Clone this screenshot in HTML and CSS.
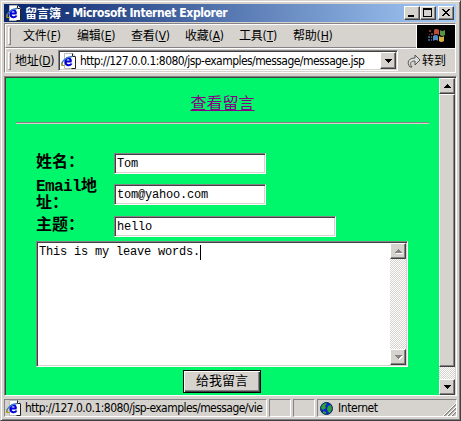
FILE: index.html
```html
<!DOCTYPE html>
<html lang="zh-CN">
<head>
<meta charset="utf-8">
<title>留言簿</title>
<link rel="stylesheet" href="styles.css">
</head>
<body>
<svg class="defs" width="0" height="0" aria-hidden="true">
  <symbol id="ie" viewBox="0 0 16 16">
    <path d="M3.500 .5h8l3 3v12h-11z" fill="#fff" stroke="#bbb"/>
    <path d="M14.500 4v11.500h-4M11.500 .5v3h3" fill="none" stroke="#222"/>
    <path d="M10.500 8.500H4.500C4.500 4.500 9.500 4 10 8.500M4.500 9c0 4 5 4 6 1.500" fill="none" stroke="#0000d8" stroke-width="2"/>
    <path d="M1 12C0 9 5 4 11 3.500" fill="none" stroke="#3978c8" stroke-width="1.300"/>
    <path d="M1 9.500v3h2.500" fill="none" stroke="#a89a00" stroke-width="1.200"/>
  </symbol>
  <symbol id="up" viewBox="0 0 7 4"><path d="M3 0h1v1h1v1h1v1h1v1H0V3h1V2h1V1h1z" fill="currentColor"/></symbol>
  <symbol id="down" viewBox="0 0 7 4"><path d="M0 0h7v1H6v1H5v1H4v1H3V3H2V2H1V1H0z" fill="currentColor"/></symbol>
</svg>
<div class="window">
  <header class="title">
    <svg class="ie"><use href="#ie"/></svg>
    <span class="title-cn">留言簿</span><span class="title-en">- Microsoft Internet Explorer</span>
    <div class="controls">
      <i class="btn"><svg viewBox="0 0 12 10"><path d="M2 7h6v2H2z"/></svg></i>
      <i class="btn"><svg viewBox="0 0 12 10"><path d="M1 0h9v9H1zM2 2v6h7V2z" fill-rule="evenodd"/></svg></i>
      <i class="btn close"><svg viewBox="0 0 12 10"><path d="M2 1h2v1h1v1h2V2h1V1h2v1H9v1H8v1H7v1h1v1h1v1h1v1H8V7H7V6H5v1H4v1H2V7h1V6h1V5h1V4H4V3H3V2H2z"/></svg></i>
    </div>
  </header>
  <div class="bars">
    <nav class="menu">
      <i class="grip"></i>
      <span>文件(<u>F</u>)</span><span>编辑(<u>E</u>)</span><span>查看(<u>V</u>)</span><span>收藏(<u>A</u>)</span><span>工具(<u>T</u>)</span><span>帮助(<u>H</u>)</span>
      <div class="throbber"><svg viewBox="0 0 38 22">
        <path d="M17 5q2-2 5 0v5q-3-2-5 0z" fill="#b85035"/><path d="M23 5q2 2 5 0v5q-3 2-5 0z" fill="#579348"/>
        <path d="M16 11q3-2 5 0v5q-2-2-5 0z" fill="#5489c5"/><path d="M22 11q3 2 5 0v5q-3 2-5 0z" fill="#d2b344"/>
        <path d="M12 5h2v2h-2zM14 8h2v2h-2zM12 9h1v1h-1z" fill="#78382c"/><path d="M11 11h2v2h-2zM14 11h1v2h-1zM11 14h2v2h-2zM14 14h1v2h-1z" fill="#31577c"/>
      </svg></div>
    </nav>
    <div class="address">
      <i class="grip"></i><span class="addr-label">地址(<u>D</u>)</span>
      <div class="combo"><svg class="ie"><use href="#ie"/></svg><span class="url">http://127.0.0.1:8080/jsp-examples/message/message.jsp</span><i class="btn drop"><svg class="arrow"><use href="#down"/></svg></i></div>
      <svg class="go" viewBox="0 0 14 14"><path d="M3 13C-1 8 2 4 8 4V1l5 5-5 5V7C4 7 2 9 5 13z" fill="#ddd" stroke="#555"/></svg><span class="go-label">转到</span>
    </div>
  </div>
  <div class="view">
    <main class="page">
      <a class="link">查看留言</a>
      <div class="rule"></div>
      <div class="row row1"><b>姓名：</b><div class="field">Tom</div></div>
      <div class="row row2"><b><span class="latin">Email</span>地<br>址：</b><div class="field">tom@yahoo.com</div></div>
      <div class="row row3"><b>主题：</b><div class="field wide">hello</div></div>
      <div class="area"><div class="words">This is my leave words.<i class="caret"></i></div>
        <div class="scroll muted"><i class="btn"><svg class="arrow"><use href="#up"/></svg></i><i class="btn"><svg class="arrow"><use href="#down"/></svg></i></div></div>
      <div class="submit">给我留言</div>
    </main>
    <div class="scroll main-scroll"><i class="btn"><svg class="arrow"><use href="#up"/></svg></i><i class="btn thumb"></i><i class="btn last"><svg class="arrow"><use href="#down"/></svg></i></div>
  </div>
  <footer class="status">
    <div class="pane p1"><svg class="ie"><use href="#ie"/></svg><span>http://127.0.0.1:8080/jsp-examples/message/vie</span></div>
    <div class="pane p2"></div><div class="pane p2"></div>
    <div class="pane p3"><svg class="globe" viewBox="0 0 13 13"><circle cx="6.500" cy="6.500" r="6" fill="#0828c8" stroke="#082850"/><path d="M2 3l3-2 2 1-2 2 1 2-3 2-2-2zM8 4l3-1 1 4-2 4-2-1-1-3zM3 9l3 1v2l-3-1z" fill="#30a038"/></svg><span>Internet</span>
      <svg class="size" viewBox="0 0 13 13"><path d="M1 13L13 1M5 13l8-8M9 13l4-4" stroke="#808080" stroke-width="1.500"/><path d="M0 13L13 0M4 13l9-9M8 13l5-5" stroke="#fff"/></svg></div>
  </footer>
</div>
</body>
</html>
```
FILE: styles.css
```css
* { box-sizing: border-box; }
body { margin: 0; width: 461px; height: 421px; overflow: hidden; background: #d6d3ce; color: #000; font: 12px/16px "DejaVu Sans Condensed", "Noto Sans CJK SC", sans-serif; }
.defs { display: block; position: absolute; }
i { font-style: normal; display: block; flex: none; }
svg { display: block; flex: none; }
span { white-space: nowrap; }
.window { width: 461px; height: 421px; padding: 3px 2px 2px 3px; border: 1px solid; border-color: #d6d3ce #424142 #424142 #d6d3ce; box-shadow: inset 1px 1px #fff, inset -1px -1px #848284; }
.ie { width: 16px; height: 16px; }
.title { width: 452px; height: 18px; display: flex; align-items: center; padding-left: 2px; background: linear-gradient(90deg, #08246b, #a5cbf7); color: #fff; font-weight: bold; }
.title-cn { font: bold 12px/18px "Noto Sans CJK TC", sans-serif; margin-left: 3px; }
.title-en { font: bold 12px/18px "DejaVu Sans Condensed", sans-serif; letter-spacing: -.400px; margin-left: 4px; }
.controls { display: flex; margin-left: auto; margin-right: 2px; }
.controls .btn { width: 16px; height: 14px; }
.controls svg { width: 12px; height: 10px; }
.controls .close { margin-left: 2px; }
.btn { background: #d6d3ce; color: #000; display: flex; align-items: center; justify-content: center; border: 1px solid; border-color: #fff #424142 #424142 #fff; box-shadow: inset -1px -1px #848284; }
.arrow { width: 7px; height: 4px; }
.bars { width: 452px; height: 50px; margin-top: 1px; border: 1px solid; border-color: #848284 #fff #fff #848284; }
.menu, .address { display: flex; align-items: center; height: 24px; }
.menu { border-top: 1px solid #fff; border-left: 1px solid #fff; border-bottom: 1px solid #848284; }
.address { border-top: 1px solid #fff; border-left: 1px solid #fff; }
.grip { width: 3px; height: 18px; margin-left: 2px; border: 1px solid; border-color: #fff #848284 #848284 #fff; }
.menu span { width: 54px; letter-spacing: -.200px; }
.menu .grip + span { margin-left: 12px; }
.throbber { width: 39px; height: 23px; background: #000; margin-left: auto; border-left: 1px solid #fff; }
.throbber svg { width: 38px; height: 22px; }
.addr-label { width: 43px; margin-left: 4px; letter-spacing: -.300px; }
.combo { display: flex; align-items: center; width: 340px; flex: none; height: 21px; padding: 0 0 0 2px; background: #fff; border: 1px solid; border-color: #848284 #fff #fff #848284; box-shadow: inset 1px 1px #424142, inset -1px -1px #d6d3ce; }
.url { margin-left: 3px; letter-spacing: -.550px; }
.drop { width: 16px; height: 17px; margin: 0 1px 0 auto; }
.go { width: 14px; height: 14px; margin-left: 9px; }
.go-label { margin-left: 1px; }
.view { width: 453px; height: 320px; margin-top: 3px; display: flex; border: 1px solid; border-color: #848284 #fff #fff #848284; box-shadow: inset 1px 1px #424142; padding: 1px 0 0 1px; }
.page { width: 433px; height: 317px; background: #00f76b; padding: 14px 10px 0; font: 13px/15px "Liberation Mono", "Noto Sans CJK SC", monospace; }
.link { display: block; width: 64px; height: 20px; margin: 0 auto; color: #840084; font: 16px/20px "Noto Sans CJK SC", sans-serif; text-decoration: underline; white-space: nowrap; }
.rule { height: 2px; margin-top: 10px; background: #d6d3ce; border-top: 1px solid #848284; }
.row { display: flex; align-items: flex-start; margin-left: 20px; }
.row b { width: 78px; font: bold 16px/17px "Liberation Mono", "Noto Sans CJK SC", monospace; white-space: nowrap; }
.latin { letter-spacing: -.600px; }
.row1 { margin-top: 29px; height: 25px; }
.row1 b { margin-top: 2px; }
.row2 { height: 34px; }
.row2 b { margin-top: 1px; }
.row2 .field { margin-top: 6px; }
.row3 { height: 29px; padding-top: 4px; }
.row3 b { margin-top: 2px; }
.field { width: 152px; height: 21px; padding: 3px 2px; background: #fff; border: 1px solid; border-color: #848284 #fff #fff #848284; box-shadow: inset 1px 1px #424142, inset -1px -1px #d6d3ce; font: 12px/14px "Liberation Mono", monospace; letter-spacing: -.200px; }
.wide { width: 222px; }
.area { display: flex; justify-content: space-between; margin-left: 20px; width: 372px; height: 126px; padding: 1px 1px 1px 2px; background: #fff; border: 1px solid; border-color: #848284 #fff #fff #848284; box-shadow: inset 1px 1px #424142, inset -1px -1px #d6d3ce; }
.words { display: flex; height: 16px; font: 12px/18px "Liberation Mono", monospace; letter-spacing: -.200px; white-space: nowrap; }
.caret { width: 1px; height: 15px; margin-top: 2px; background: #000; }
.scroll { width: 16px; display: flex; flex-direction: column; background: repeating-conic-gradient(#fff 0 25%, #d6d3ce 0 50%) 0 0/2px 2px; }
.scroll .btn { width: 16px; height: 16px; }
.muted { justify-content: space-between; }
.muted .arrow { color: #848284; filter: drop-shadow(1px 1px #fff); }
.submit { width: 78px; height: 23px; margin: 3px 0 0 167px; text-align: center; background: #d6d3ce; border: 1px solid #000; box-shadow: inset 1px 1px #fff, inset -1px -1px #424142, inset -2px -2px #848284; font: 13px/18px "Noto Sans CJK SC", sans-serif; }
.main-scroll { height: 317px; }
.scroll .thumb { height: 273px; }
.main-scroll .last { margin-top: auto; }
.status { display: flex; margin-top: 3px; height: 18px; gap: 2px; width: 453px; }
.pane { display: flex; align-items: center; overflow: hidden; border: 1px solid; border-color: #848284 #fff #fff #848284; height: 18px; }
.p1 { width: 263px; padding-left: 1px; }
.p1 span { margin-left: 3px; letter-spacing: -.550px; }
.p2 { width: 22px; }
.p3 { width: 140px; padding-left: 2px; }
.globe { width: 13px; height: 13px; }
.p3 span { margin-left: 5px; letter-spacing: -.400px; }
.size { width: 13px; height: 13px; margin-left: auto; align-self: flex-end; }
```
